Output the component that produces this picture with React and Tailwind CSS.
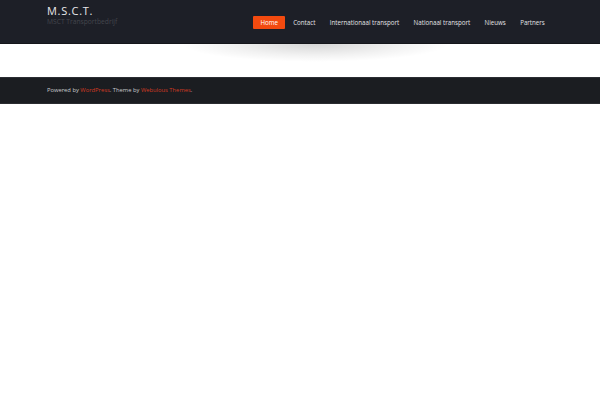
export default function App() {
  const nav = ["Contact", "Internationaal transport", "Nationaal transport", "Nieuws", "Partners"];
  return (
    <div className="w-[600px] h-[400px] bg-white" style={{ fontFamily: '"Open Sans", "DejaVu Sans", sans-serif' }}>
      <header className="relative h-[44px] bg-[#1d1f27] border-b border-[#15161b]">
        <div className="flex items-start justify-between pl-[47px] pr-[48px]">
          <div className="pt-[5px]">
            <div className="text-[11px] leading-[12px] tracking-[0.7px] text-[#e8e8ea]">M.S.C.T.</div>
            <div className="text-[6.7px] leading-[8px] mt-[1px] text-[#44464d]">MSCT Transportbedrijf</div>
          </div>
          <nav className="flex items-center pt-[16px]">
            <span className="bg-[#f34a0f] text-white text-[6.2px] h-[13px] px-[7px] mr-[1px] flex items-center rounded-[1px]">Home</span>
            {nav.map((n) => (
              <span key={n} className="text-[#e2e3e6] text-[6.2px] h-[13px] px-[7.2px] flex items-center">{n}</span>
            ))}
          </nav>
        </div>
        <div className="absolute left-[180px] top-[44px] w-[270px] h-[18px] pointer-events-none bg-[radial-gradient(ellipse_at_top,rgba(0,0,0,0.16),rgba(0,0,0,0.05)_45%,transparent_70%)]" />
      </header>
      <div className="h-[33px]" />
      <footer className="h-[27px] bg-[#1b1d21] border-t border-[#2c2e33] border-b border-b-[#2a2c30] flex items-center pl-[47px]">
        <span className="text-[5.8px] text-[#c9cacd]">
          Powered by <span className="text-[#d23a22]">WordPress</span>. Theme by <span className="text-[#d23a22]">Webulous Themes</span>.
        </span>
      </footer>
    </div>
  );
}
